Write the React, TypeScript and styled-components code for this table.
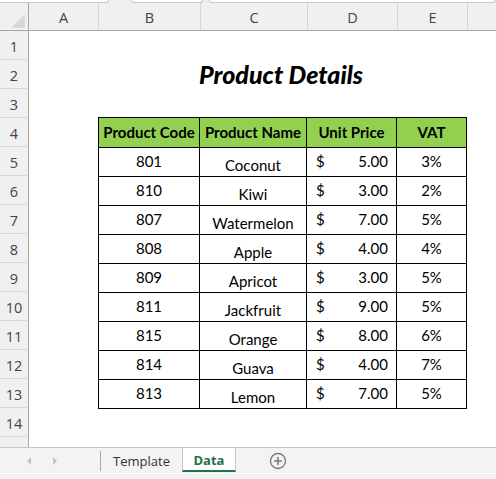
import React from "react";
import styled, { createGlobalStyle } from "styled-components";

const Global = createGlobalStyle`
  html, body { margin: 0; padding: 0; background: #ffffff; }
  body { width: 496px; height: 479px; overflow: hidden; }
  * { box-sizing: border-box; }
`;

const Frame = styled.div`
  width: 496px;
  height: 479px;
  display: flex;
  flex-direction: column;
  background: #fff;
  font-family: "Open Sans", "Noto Sans", sans-serif;
  overflow: hidden;
`;

const TopStrip = styled.div`
  height: 3px;
  display: flex;
  background: #efefef;
  overflow: hidden;
  flex: none;
`;

const Pill = styled.div<{ $w?: number; $ml?: number; $grow?: boolean }>`
  height: 3px;
  width: ${(p) => (p.$w ? `${p.$w}px` : "auto")};
  flex: ${(p) => (p.$grow ? "1" : "none")};
  margin-left: ${(p) => p.$ml ?? 0}px;
  background: #fff;
  border: 1px solid #c9c9c9;
  border-top: none;
  border-radius: 0 0 4px 4px;
`;

const COLS = "29px 69px 102px 107px 90px 70px 1fr";

const ColHeaderRow = styled.div`
  height: 28px;
  flex: none;
  display: grid;
  grid-template-columns: ${COLS};
  background: #f0f0f0;
  border-bottom: 1px solid #a6a6a6;
`;

const Corner = styled.div`
  display: flex;
  align-items: flex-end;
  justify-content: flex-end;
  padding: 0 3px 2px 0;
  border-right: 1px solid #a6a6a6;
`;

const CornerTriangle = styled.div`
  width: 0;
  height: 0;
  border-left: 14px solid transparent;
  border-bottom: 14px solid #d9d9d9;
`;

const ColLetter = styled.div<{ $sep?: boolean }>`
  display: flex;
  align-items: flex-end;
  justify-content: center;
  padding-bottom: 2px;
  font-size: 14.5px;
  color: #444;
  border-left: ${(p) => (p.$sep ? "1px solid #d6d6d6" : "none")};
  line-height: 20px;
`;

const Sheet = styled.div`
  flex: 1;
  display: grid;
  grid-template-columns: ${COLS};
  grid-template-rows: repeat(14, 29px) 1fr;
  background: #fff;
  min-height: 0;
`;

const RowNum = styled.div<{ $row: number }>`
  grid-column: 1;
  grid-row: ${(p) => p.$row};
  background: #f0f0f0;
  border-right: 1px solid #a6a6a6;
  border-bottom: ${(p) => (p.$row <= 14 ? "1px solid #d6d6d6" : "none")};
  display: flex;
  align-items: flex-end;
  justify-content: center;
  padding-bottom: 1px;
  font-size: 14.5px;
  color: #444;
  line-height: 22px;
`;

const Title = styled.div`
  grid-column: 3 / 7;
  grid-row: 2;
  display: flex;
  align-items: flex-end;
  justify-content: center;
  font-family: "Lato", "Open Sans", sans-serif;
  font-weight: 900;
  font-style: italic;
  font-size: 25px;
  line-height: 28px;
  padding-bottom: 1px;
  padding-right: 3px;
  color: #000;
`;

const Table = styled.div`
  grid-column: 3 / 7;
  grid-row: 4 / 14;
  margin-top: -1px;
  display: grid;
  grid-template-columns: 101px 107px 90px 70px;
  grid-template-rows: 30px repeat(9, 29px);
  border-left: 1px solid #000;
  border-top: 1px solid #000;
  align-self: start;
`;

const Cell = styled.div<{ $head?: boolean; $align?: "center" | "bottom" }>`
  border-right: 1px solid #000;
  border-bottom: 1px solid #000;
  background: ${(p) => (p.$head ? "#92d050" : "#fff")};
  display: flex;
  justify-content: center;
  align-items: ${(p) => (p.$align === "bottom" ? "flex-end" : "center")};
  padding-bottom: ${(p) => (p.$align === "bottom" ? "1px" : p.$head ? "2px" : "3px")};
  font-family: "Lato", "Open Sans", sans-serif;
  font-size: ${(p) => (p.$head ? "15px" : "15px")};
  font-weight: ${(p) => (p.$head ? 700 : 400)};
  color: #000;
  white-space: nowrap;
  line-height: 20px;
`;

const PriceCell = styled(Cell)`
  justify-content: space-between;
  padding-left: 9px;
  padding-right: 8px;
`;

const TabBar = styled.div`
  height: 32px;
  flex: none;
  display: flex;
  flex-direction: column;
  background: #f0f0f0;
`;

const TabRow = styled.div`
  height: 27px;
  display: flex;
  align-items: stretch;
  background: #f3f3f3;
  border-top: 1px solid #c6c6c6;
  border-bottom: 1px solid #ffffff;
`;

const NavArea = styled.div`
  width: 100px;
  display: flex;
  align-items: center;
  padding-left: 27px;
  gap: 22px;
`;

const Arrow = styled.div<{ $dir: "left" | "right" }>`
  width: 0;
  height: 0;
  border-top: 4px solid transparent;
  border-bottom: 4px solid transparent;
  ${(p) =>
    p.$dir === "left"
      ? "border-right: 4px solid #c3c3c3;"
      : "border-left: 4px solid #c3c3c3;"}
`;

const Divider = styled.div`
  width: 1px;
  margin: 3px 0 2px;
  background: #a9a9a9;
`;

const Tab = styled.div<{ $active?: boolean }>`
  width: ${(p) => (p.$active ? "54px" : "81px")};
  display: flex;
  align-items: center;
  justify-content: center;
  font-size: 13px;
  font-weight: ${(p) => (p.$active ? 700 : 400)};
  color: ${(p) => (p.$active ? "#1e7145" : "#333")};
  background: ${(p) => (p.$active ? "#ffffff" : "transparent")};
  border-left: ${(p) => (p.$active ? "1px solid #c6c6c6" : "none")};
  border-right: ${(p) => (p.$active ? "1px solid #c6c6c6" : "none")};
  border-bottom: ${(p) => (p.$active ? "2px solid #217346" : "none")};
  margin-bottom: ${(p) => (p.$active ? "1px" : "0")};
  padding-top: ${(p) => (p.$active ? "1px" : "0")};
`;

const AddBtn = styled.div`
  margin-left: 33px;
  display: flex;
  align-items: center;
`;

const rows = [
  ["801", "Coconut", "5.00", "3%"],
  ["810", "Kiwi", "3.00", "2%"],
  ["807", "Watermelon", "7.00", "5%"],
  ["808", "Apple", "4.00", "4%"],
  ["809", "Apricot", "3.00", "5%"],
  ["811", "Jackfruit", "9.00", "5%"],
  ["815", "Orange", "8.00", "6%"],
  ["814", "Guava", "4.00", "7%"],
  ["813", "Lemon", "7.00", "5%"],
];

export default function App() {
  return (
    <Frame>
      <Global />
      <TopStrip>
        <Pill $w={119} $ml={-10} />
        <Pill $w={72} $ml={22} />
        <Pill $grow $ml={6} />
      </TopStrip>
      <ColHeaderRow>
        <Corner>
          <CornerTriangle />
        </Corner>
        <ColLetter>A</ColLetter>
        <ColLetter $sep>B</ColLetter>
        <ColLetter $sep>C</ColLetter>
        <ColLetter $sep>D</ColLetter>
        <ColLetter $sep>E</ColLetter>
        <ColLetter $sep />
      </ColHeaderRow>
      <Sheet>
        {Array.from({ length: 15 }, (_, i) => (
          <RowNum key={i} $row={i + 1}>
            {i < 14 ? i + 1 : ""}
          </RowNum>
        ))}
        <Title>Product Details</Title>
        <Table>
          <Cell $head>Product Code</Cell>
          <Cell $head>Product Name</Cell>
          <Cell $head>Unit Price</Cell>
          <Cell $head>VAT</Cell>
          {rows.map((r) => (
            <React.Fragment key={r[0]}>
              <Cell>{r[0]}</Cell>
              <Cell $align="bottom">{r[1]}</Cell>
              <PriceCell>
                <span>$</span>
                <span>{r[2]}</span>
              </PriceCell>
              <Cell>{r[3]}</Cell>
            </React.Fragment>
          ))}
        </Table>
      </Sheet>
      <TabBar>
        <TabRow>
          <NavArea>
            <Arrow $dir="left" />
            <Arrow $dir="right" />
          </NavArea>
          <Divider />
          <Tab>Template</Tab>
          <Tab $active>Data</Tab>
          <AddBtn>
            <svg width="18" height="18" viewBox="0 0 18 18">
              <circle cx="9" cy="9" r="7.5" fill="none" stroke="#7a7a7a" strokeWidth="1.3" />
              <path d="M9 5v8M5 9h8" stroke="#7a7a7a" strokeWidth="1.6" />
            </svg>
          </AddBtn>
        </TabRow>
      </TabBar>
    </Frame>
  );
}
